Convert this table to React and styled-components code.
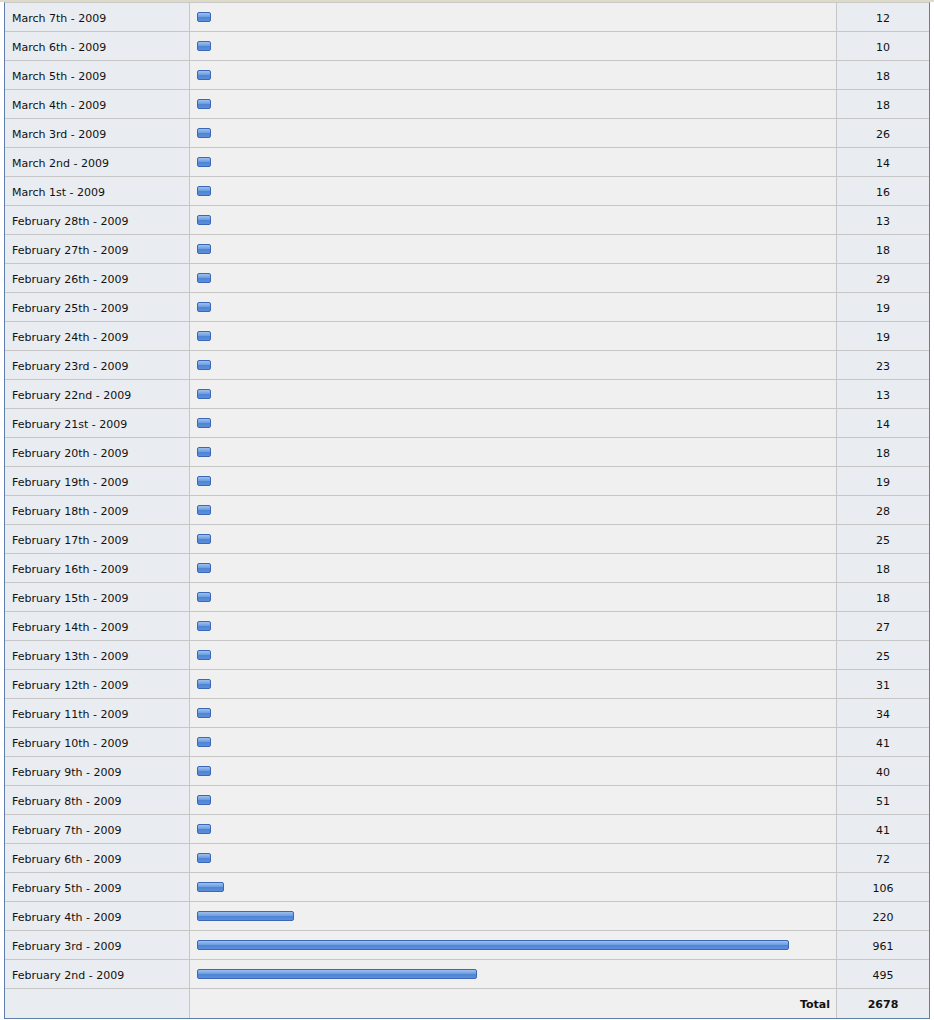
import React from 'react';
import styled, { createGlobalStyle } from 'styled-components';

const GlobalStyle = createGlobalStyle`
  body {
    margin: 0;
    background: #ffffff;
    font-family: "DejaVu Sans", Verdana, sans-serif;
  }
`;

const TopStrip = styled.div`
  height: 2px;
  background-color: #dedac8;
`;

const Table = styled.div`
  width: 926px;
  margin: 0 0 0 4px;
  box-sizing: border-box;
  border: 1px solid #5f7eae;
  border-top: 1px solid #c9c9c9;
  box-shadow: inset 1px 0 0 #ffffff, inset -1px 0 0 #ffffff, inset 0 -1px 0 #ffffff;
`;

const Row = styled.div`
  display: grid;
  grid-template-columns: 185px 647px 92px;
  height: 29px;
  box-sizing: border-box;
  border-bottom: ${({ last }) => (last ? 'none' : '1px solid #c6c6c6')};
`;

const Cell = styled.div`
  display: flex;
  align-items: center;
  box-sizing: border-box;
  padding-top: 2px;
  font-size: 11px;
  color: #111111;
  background-color: ${({ alt }) => (alt ? '#f0f0f0' : '#e9ecf0')};
  border-right: ${({ end }) => (end ? 'none' : '1px solid #c6c6c6')};
`;

const DateCell = styled(Cell)`
  padding-left: 7px;
`;

const BarCell = styled(Cell)`
  padding-left: 7px;
  justify-content: ${({ right }) => (right ? 'flex-end' : 'flex-start')};
  padding-right: ${({ right }) => (right ? '6px' : '0')};
  font-weight: ${({ right }) => (right ? 'bold' : 'normal')};
`;

const CountCell = styled(Cell)`
  justify-content: center;
  font-weight: ${({ bold }) => (bold ? 'bold' : 'normal')};
`;

const Bar = styled.div`
  height: 10px;
  margin-top: -2px;
  box-sizing: border-box;
  border: 1px solid #3a67b6;
  border-radius: 2px;
  background: linear-gradient(#9cc0ee 0%, #6f9fe0 45%, #4f85d4 55%, #5b8fda 100%);
`;

const rows = [
  ['March 7th - 2009', 12, 14],
  ['March 6th - 2009', 10, 14],
  ['March 5th - 2009', 18, 14],
  ['March 4th - 2009', 18, 14],
  ['March 3rd - 2009', 26, 14],
  ['March 2nd - 2009', 14, 14],
  ['March 1st - 2009', 16, 14],
  ['February 28th - 2009', 13, 14],
  ['February 27th - 2009', 18, 14],
  ['February 26th - 2009', 29, 14],
  ['February 25th - 2009', 19, 14],
  ['February 24th - 2009', 19, 14],
  ['February 23rd - 2009', 23, 14],
  ['February 22nd - 2009', 13, 14],
  ['February 21st - 2009', 14, 14],
  ['February 20th - 2009', 18, 14],
  ['February 19th - 2009', 19, 14],
  ['February 18th - 2009', 28, 14],
  ['February 17th - 2009', 25, 14],
  ['February 16th - 2009', 18, 14],
  ['February 15th - 2009', 18, 14],
  ['February 14th - 2009', 27, 14],
  ['February 13th - 2009', 25, 14],
  ['February 12th - 2009', 31, 14],
  ['February 11th - 2009', 34, 14],
  ['February 10th - 2009', 41, 14],
  ['February 9th - 2009', 40, 14],
  ['February 8th - 2009', 51, 14],
  ['February 7th - 2009', 41, 14],
  ['February 6th - 2009', 72, 14],
  ['February 5th - 2009', 106, 27],
  ['February 4th - 2009', 220, 97],
  ['February 3rd - 2009', 961, 592],
  ['February 2nd - 2009', 495, 280],
];

// total covers the full report, including days above this part of the list
const TOTAL = 2678;

export default function App() {
  return (
    <>
      <GlobalStyle />
      <TopStrip />
      <Table>
        {rows.map(([date, count, width]) => (
          <Row key={date}>
            <DateCell>{date}</DateCell>
            <BarCell alt>
              <Bar style={{ width }} />
            </BarCell>
            <CountCell end>{count}</CountCell>
          </Row>
        ))}
        <Row last>
          <DateCell />
          <BarCell alt right>Total</BarCell>
          <CountCell end bold>{TOTAL}</CountCell>
        </Row>
      </Table>
    </>
  );
}
